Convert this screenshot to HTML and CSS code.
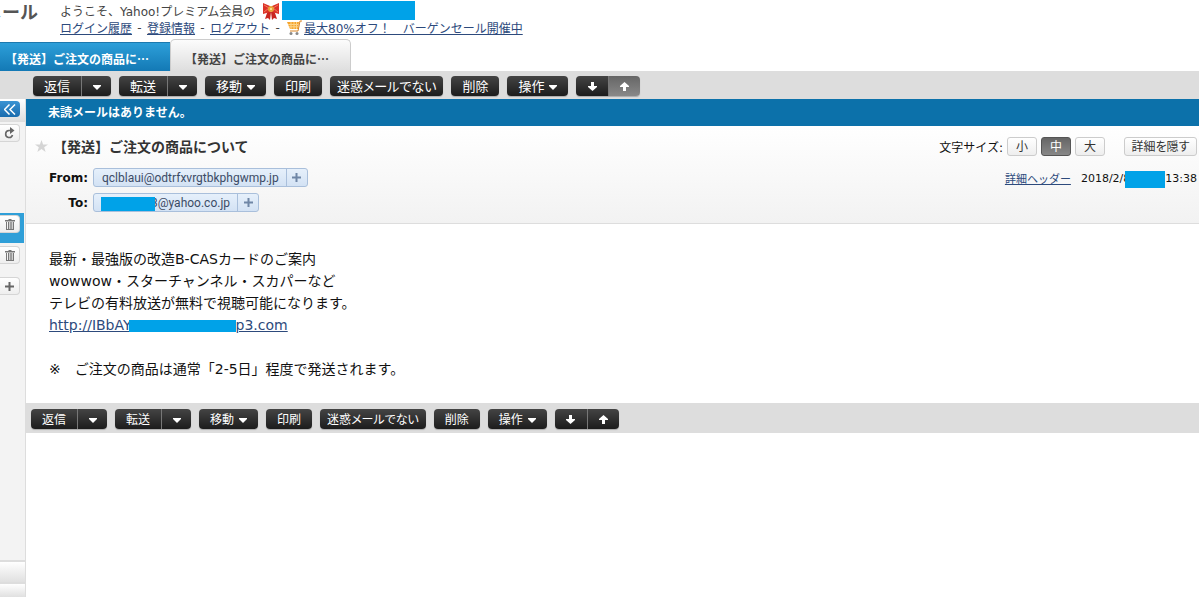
FILE: index.html
```html
<!DOCTYPE html>
<html lang="ja">
<head>
  <meta charset="UTF-8">
  <meta name="viewport" content="width=device-width, initial-scale=1.0">
  <title>Yahoo!メール</title>
  <link rel="stylesheet" href="styles.css">
</head>
<body>
  <svg width="0" height="0" class="defs" aria-hidden="true">
    <symbol id="caret" viewBox="0 0 8 5"><path d="M0 0h8v1L4 5 0 1z" fill="currentColor"/></symbol>
    <symbol id="down" viewBox="0 0 9 9"><path d="M3 0h3v4h3v1L4.500 9 0 5V4h3z" fill="currentColor"/></symbol>
    <symbol id="up" viewBox="0 0 9 9"><path d="M3 9h3V5h3V4L4.500 0 0 4v1h3z" fill="currentColor"/></symbol>
    <symbol id="trash" viewBox="0 0 10 11"><path d="M0 1h10v1.500H0zM3.500 0h3v1h-3zM1 3h1v8H1zM8 3h1v8H8zM1 10h8v1H1zM3 3h1v7H3zM4.700 3h1v7h-1zM6.300 3h1v7h-1z" fill="#777"/></symbol>
  </svg>

  <header>
    <h1 class="logo">メール</h1>
    <div class="account">
      <p>ようこそ、Yahoo!プレミアム会員の
        <svg class="ribbon" width="18" height="18" viewBox="0 0 18 18">
          <path d="M6 8l-3 9 3-1 2 2 1-8zM12 8l3 9-3-1-2 2-1-8z" fill="#c9251f"/>
          <path d="M1 1l7 3v6l-7 2zM17 1l-7 3v6l7 2z" fill="#dc3228"/>
          <path d="M2 3l5 3-5 4M16 3l-5 3 5 4" fill="none" stroke="#f07a5a"/>
          <circle cx="9" cy="7" r="3" fill="#e8a33a"/>
          <circle cx="9" cy="7" r="1" fill="#fff0a0"/>
        </svg>
        <span class="mask mask-name"></span></p>
      <p>
        <a href="#">ログイン履歴</a><span class="sep">-</span><a href="#">登録情報</a><span class="sep">-</span><a href="#">ログアウト</a><span class="sep">-</span>
        <svg class="cart" width="17" height="16" viewBox="0 0 17 16">
          <path d="M1 2h12l-1 7H4z" fill="#f6a42c"/>
          <path d="M2 4.500h10M3 6.800h9M5 2v7M8 2v7M10.500 2v7" stroke="#fbd48c" fill="none"/>
          <path d="M16 1h-2l-2 10H4" stroke="#d98424" fill="none"/>
          <circle cx="5" cy="13.500" r="1.500" fill="#888"/>
          <circle cx="11" cy="13.500" r="1.500" fill="#888"/>
        </svg>
        <a href="#">最大80%オフ！　バーゲンセール開催中</a>
      </p>
    </div>
  </header>

  <nav class="tabs">
    <a href="#" class="tab">【発送】ご注文の商品に…</a>
    <a href="#" class="tab active">【発送】ご注文の商品に…</a>
  </nav>

  <div class="toolbar">
    <div class="group"><button>返信</button><button class="more" aria-label="返信メニュー"><svg class="caret"><use href="#caret"/></svg></button></div>
    <div class="group"><button>転送</button><button class="more" aria-label="転送メニュー"><svg class="caret"><use href="#caret"/></svg></button></div>
    <div class="group"><button>移動<svg class="caret"><use href="#caret"/></svg></button></div>
    <div class="group"><button>印刷</button></div>
    <div class="group"><button class="spam">迷惑メールでない</button></div>
    <div class="group"><button>削除</button></div>
    <div class="group"><button>操作<svg class="caret"><use href="#caret"/></svg></button></div>
    <div class="group"><button class="arrow" aria-label="次のメール"><svg><use href="#down"/></svg></button><button class="arrow hover" aria-label="前のメール"><svg><use href="#up"/></svg></button></div>
  </div>

  <div class="layout">
    <aside>
      <div class="side-row"><button class="side-btn collapse" aria-label="閉じる"><svg width="12" height="11" viewBox="0 0 12 11"><path d="M5.500 0.500l-5 5 5 5M11 0.500l-5 5 5 5" fill="none" stroke="#fff" stroke-width="1.500"/></svg></button></div>
      <div class="side-row reload"><button class="side-btn" aria-label="更新"><svg width="11" height="12" viewBox="0 0 11 12"><path d="M7 3.500H5a3.500 3.500 0 1 0 3.500 4.500" fill="none" stroke="#666" stroke-width="1.600"/><path d="M6 0l4.500 3.500L6 7z" fill="#666"/></svg></button></div>
      <div class="side-row selected"><button class="side-btn" aria-label="ゴミ箱を空にする"><svg width="10" height="11"><use href="#trash"/></svg></button></div>
      <div class="side-row"><button class="side-btn" aria-label="迷惑メールを空にする"><svg width="10" height="11"><use href="#trash"/></svg></button></div>
      <div class="side-row"><button class="side-btn" aria-label="フォルダー追加"><svg width="9" height="9" viewBox="0 0 9 9"><path d="M4.500 0v9M0 4.500h9" stroke="#666" stroke-width="2"/></svg></button></div>
      <div class="side-foot"></div>
      <div class="side-foot last"></div>
    </aside>

    <main>
      <div class="notice">未読メールはありません。</div>
      <section class="mail-head">
        <div class="head-row">
          <svg width="13" height="12" viewBox="0 0 13 12"><path d="M6.500 0l1.600 4.400H13L9.200 7.200l1.400 4.800-4.100-2.900L2.400 12l1.400-4.800L0 4.400h4.900z" fill="#d5d5d5"/></svg>
          <h2>【発送】ご注文の商品について</h2>
          <div class="sizes">
            <span>文字サイズ:</span>
            <button class="light">小</button>
            <button class="light on">中</button>
            <button class="light">大</button>
            <button class="light detail">詳細を隠す</button>
          </div>
        </div>
        <div class="head-row address-row">
          <b>From:</b>
          <div class="address"><span>qclblaui@odtrfxvrgtbkphgwmp.jp</span><button aria-label="アドレスを追加"><svg width="9" height="9" viewBox="0 0 9 9"><path d="M4.500 0v9M0 4.500h9" stroke="#6f86a6" stroke-width="2"/></svg></button></div>
          <div class="date"><a href="#">詳細ヘッダー</a><span>2018/2/8<i class="mask mask-time"></i>13:38</span></div>
        </div>
        <div class="head-row address-row">
          <b>To:</b>
          <div class="address"><span><i class="mask mask-user"></i>3@yahoo.co.jp</span><button aria-label="アドレスを追加"><svg width="9" height="9" viewBox="0 0 9 9"><path d="M4.500 0v9M0 4.500h9" stroke="#6f86a6" stroke-width="2"/></svg></button></div>
        </div>
      </section>

      <article>
        <p>最新・最強版の改造B-CASカードのご案内<br>
        wowwow・スターチャンネル・スカパーなど<br>
        テレビの有料放送が無料で視聴可能になります。<br>
        <a href="#">http://IBbAY<i class="mask mask-url"></i>p3.com</a></p>
        <p>※　ご注文の商品は通常「2-5日」程度で発送されます。</p>
      </article>

      <div class="toolbar bottom">
        <div class="group"><button>返信</button><button class="more" aria-label="返信メニュー"><svg class="caret"><use href="#caret"/></svg></button></div>
        <div class="group"><button>転送</button><button class="more" aria-label="転送メニュー"><svg class="caret"><use href="#caret"/></svg></button></div>
        <div class="group"><button>移動<svg class="caret"><use href="#caret"/></svg></button></div>
        <div class="group"><button>印刷</button></div>
        <div class="group"><button class="spam">迷惑メールでない</button></div>
        <div class="group"><button>削除</button></div>
        <div class="group"><button>操作<svg class="caret"><use href="#caret"/></svg></button></div>
        <div class="group"><button class="arrow" aria-label="次のメール"><svg><use href="#down"/></svg></button><button class="arrow" aria-label="前のメール"><svg><use href="#up"/></svg></button></div>
      </div>
    </main>
  </div>
</body>
</html>
```

FILE: styles.css
```css
* {
  box-sizing: border-box;
}
body {
  margin: 0;
  min-height: 100vh;
  display: flex;
  flex-direction: column;
  font-family: "DejaVu Sans", "Noto Sans CJK JP", sans-serif;
  font-size: 12px;
  color: #111;
  background: #fff;
}
h1, h2, p {
  margin: 0;
}
a {
  color: #2d4a7c;
}
button {
  font-family: "Noto Sans CJK JP", sans-serif;
  font-feature-settings: "palt";
  border: none;
  margin: 0;
  padding: 0;
  display: flex;
  align-items: center;
  justify-content: center;
  cursor: pointer;
}
.defs {
  position: absolute;
}
.mask {
  display: inline-block;
  position: relative;
  background: #00a2e8;
}

/* header */
header {
  display: flex;
  height: 39px;
}
.logo {
  width: 38px;
  margin-right: 22px;
  display: flex;
  justify-content: flex-end;
  overflow: hidden;
  white-space: nowrap;
  font-size: 18px;
  line-height: 26px;
  color: #555;
}
.account {
  padding-top: 2px;
  color: #444;
}
.account p {
  display: flex;
  align-items: center;
  height: 17px;
  white-space: nowrap;
}
.ribbon {
  margin-left: 7px;
}
.mask-name {
  width: 133px;
  height: 19px;
  margin-left: 2px;
}
.sep {
  width: 15px;
  text-align: center;
}
.cart {
  margin: 0 1px;
}

/* tabs */
.tabs {
  display: flex;
  align-items: flex-end;
  height: 32px;
}
.tab {
  width: 170px;
  height: 29px;
  padding-left: 5px;
  line-height: 32px;
  font-family: "Noto Sans CJK JP", sans-serif;
  font-weight: bold;
  color: #fff;
  text-decoration: none;
  white-space: nowrap;
  background: linear-gradient(#2d9fd9, #1379b5);
  border-top: 1px solid #1c79ae;
}
.tab.active {
  width: 181px;
  height: 32px;
  padding-left: 14px;
  line-height: 38px;
  color: #444;
  background: linear-gradient(#fcfcfc, #dedede);
  border: 1px solid #ccc;
  border-bottom: none;
  border-radius: 5px 5px 0 0;
}

/* toolbar */
.toolbar {
  display: flex;
  gap: 8px;
  height: 28px;
  padding: 5px 0 0 33px;
  background: #ddd;
}
.group {
  display: flex;
  height: 20px;
  border-radius: 4px;
  overflow: hidden;
  box-shadow: 0 1px 1px #aaa;
}
.group button {
  padding: 0 11px 2px;
  color: #fff;
  font-size: 13px;
  white-space: nowrap;
  background: linear-gradient(#444, #1c1c1c);
}
.group .spam {
  padding: 0 7px 2px;
}
.group .more {
  width: 30px;
  padding: 0;
  border-left: 1px solid #777;
}
.group .arrow {
  width: 32px;
  padding: 0;
}
.group .arrow + .arrow {
  border-left: 1px solid #777;
}
.group .hover {
  background: linear-gradient(#666, #888);
}
.arrow svg {
  width: 9px;
  height: 9px;
}
.caret {
  width: 8px;
  height: 5px;
  margin-top: 3px;
}
button:not(.more) > .caret {
  margin-left: 5px;
  margin-top: 5px;
}
.toolbar.bottom {
  height: 30px;
  padding: 6px 0 0 5px;
}
.bottom .group button {
  font-size: 12px;
}

/* sidebar */
.layout {
  display: flex;
  flex: 1;
}
aside {
  width: 26px;
  flex-shrink: 0;
  display: flex;
  flex-direction: column;
  background: #f3f3f3;
  border-right: 1px solid #ddd;
}
.side-row {
  height: 31px;
  padding-top: 2px;
  flex-shrink: 0;
}
.side-row:first-child {
  height: 23px;
  background: linear-gradient(#fff, #ddd);
}
.side-btn {
  width: 20px;
  height: 18px;
  background: linear-gradient(#fff, #eee);
  border: 1px solid #d5d5d5;
  border-left: none;
  border-radius: 0 4px 4px 0;
}
.side-btn.collapse {
  height: 16px;
  background: linear-gradient(#3b93d3, #1a6cae);
  border: none;
}
.side-row.reload {
  height: 91px;
}
.side-row.selected {
  height: 30px;
  margin-right: 1px;
  margin-bottom: 1px;
  background: #2f9fd8;
}
.side-foot {
  height: 22px;
  margin-top: auto;
  border-top: 2px solid #ddd;
  background: linear-gradient(#fff, #e0e0e0);
}
.side-foot.last {
  height: 15px;
  margin-top: 0;
}

/* mail */
main {
  flex: 1;
  min-width: 0;
}
.notice {
  height: 27px;
  padding-left: 22px;
  line-height: 28px;
  font-weight: bold;
  color: #fff;
  background: #0c71aa;
}
.mail-head {
  height: 98px;
  padding: 8px 2px 0 9px;
  background: linear-gradient(#fff, #f2f2f2);
  border-bottom: 1px solid #ddd;
}
.head-row {
  display: flex;
  align-items: center;
  height: 25px;
}
h2 {
  margin-left: 5px;
  font-size: 14px;
  color: #333;
}
.sizes {
  display: flex;
  align-items: center;
  gap: 4px;
  margin-left: auto;
}
.light {
  width: 30px;
  height: 19px;
  padding-bottom: 2px;
  font-size: 12px;
  color: #333;
  background: linear-gradient(#fff, #eee);
  border: 1px solid #ccc;
  border-radius: 3px;
}
.light.on {
  color: #fff;
  background: linear-gradient(#666, #888);
  border-color: #555;
}
.light.detail {
  width: 73px;
  margin-left: 15px;
}
.mail-head .head-row:first-child {
  height: 31px;
  padding-bottom: 7px;
}
.address-row b {
  width: 53px;
  text-align: right;
  margin-right: 5px;
}
.address {
  display: flex;
  align-items: center;
  height: 19px;
  padding-left: 8px;
  font-family: Roboto, sans-serif;
  color: #3c4c66;
  background: linear-gradient(#e6f0fb, #d3e2f4);
  border: 1px solid #a9bfdb;
  border-radius: 3px;
}
.address span {
  display: flex;
  align-items: center;
}
.address button {
  width: 21px;
  height: 17px;
  margin-left: 7px;
  background: none;
  border-left: 1px solid #a9bfdb;
}
.mask-user {
  width: 54px;
  height: 14px;
  margin: 3px -4px 0 -1px;
}
.date {
  display: flex;
  align-items: center;
  gap: 10px;
  margin-left: auto;
  font-size: 11px;
}
.date span {
  padding-top: 2px;
}
.mask-time {
  width: 40px;
  height: 17px;
  margin: -4px 0 -4px -5px;
  vertical-align: middle;
}
article {
  padding: 24px 23px 23px;
  font-size: 14px;
  line-height: 22px;
}
article p + p {
  margin-top: 22px;
}
.mask-url {
  width: 107px;
  height: 12px;
  margin-left: -3px;
  vertical-align: -2px;
}
```
